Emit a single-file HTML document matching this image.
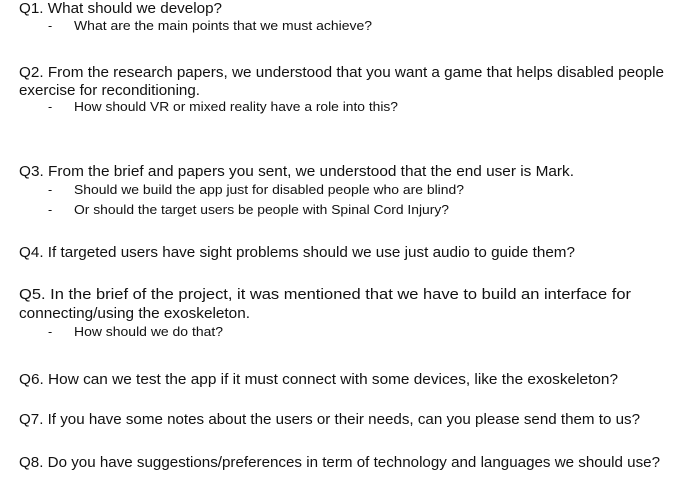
<!DOCTYPE html>
<html><head><style>
html,body{margin:0;padding:0;background:#fff;}
svg{display:block}
text{font-family:"Liberation Sans",sans-serif;fill:#111;}
.m{font-size:14.5px}
.s{font-size:12.5px}
</style></head><body>
<svg width="684" height="477" xmlns="http://www.w3.org/2000/svg">
<text class="m" x="19" y="13" textLength="203" lengthAdjust="spacingAndGlyphs">Q1. What should we develop?</text>
<text class="s" x="48" y="30">-</text>
<text class="s" x="74" y="30" textLength="298" lengthAdjust="spacingAndGlyphs">What are the main points that we must achieve?</text>

<text class="m" x="19" y="77" textLength="645" lengthAdjust="spacingAndGlyphs">Q2. From the research papers, we understood that you want a game that helps disabled people</text>
<text class="m" x="19" y="95" textLength="181" lengthAdjust="spacingAndGlyphs">exercise for reconditioning.</text>
<text class="s" x="48" y="111">-</text>
<text class="s" x="74" y="111" textLength="324" lengthAdjust="spacingAndGlyphs">How should VR or mixed reality have a role into this?</text>

<text class="m" x="19" y="176" textLength="555" lengthAdjust="spacingAndGlyphs">Q3. From the brief and papers you sent, we understood that the end user is Mark.</text>
<text class="s" x="48" y="194">-</text>
<text class="s" x="74" y="194" textLength="390" lengthAdjust="spacingAndGlyphs">Should we build the app just for disabled people who are blind?</text>
<text class="s" x="48" y="214">-</text>
<text class="s" x="74" y="214" textLength="375" lengthAdjust="spacingAndGlyphs">Or should the target users be people with Spinal Cord Injury?</text>

<text class="m" x="19" y="257" textLength="556" lengthAdjust="spacingAndGlyphs">Q4. If targeted users have sight problems should we use just audio to guide them?</text>

<text class="m" x="19" y="299" textLength="612" lengthAdjust="spacingAndGlyphs">Q5.  In the brief of the project, it was mentioned that we have to build an interface for</text>
<text class="m" x="19" y="318" textLength="231" lengthAdjust="spacingAndGlyphs">connecting/using the exoskeleton.</text>
<text class="s" x="48" y="336">-</text>
<text class="s" x="74" y="336" textLength="149" lengthAdjust="spacingAndGlyphs">How should we do that?</text>

<text class="m" x="19" y="384" textLength="599" lengthAdjust="spacingAndGlyphs">Q6. How can we test the app if it must connect with some devices, like the exoskeleton?</text>
<text class="m" x="19" y="424" textLength="621" lengthAdjust="spacingAndGlyphs">Q7. If you have some notes about the users or their needs, can you please send them to us?</text>
<text class="m" x="19" y="467" textLength="641" lengthAdjust="spacingAndGlyphs">Q8. Do you have suggestions/preferences in term of technology and languages we should use?</text>
</svg>
</body></html>
